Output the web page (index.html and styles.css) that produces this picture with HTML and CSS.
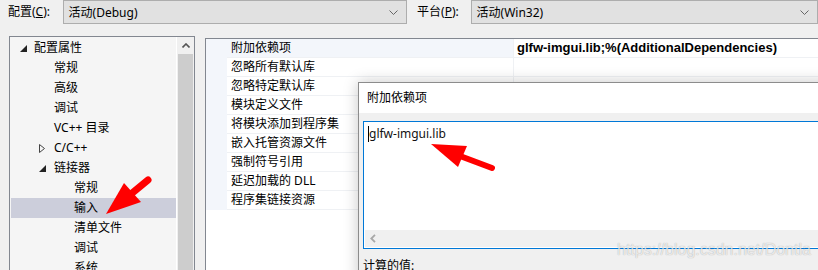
FILE: index.html
```html
<!DOCTYPE html>
<html lang="zh-CN">
<head>
    <meta charset="UTF-8">
    <title>属性页</title>
    <link rel="stylesheet" href="styles.css">
</head>
<body>
    <div class="toolbar">
        <span class="label label-config">配置(<u>C</u>):</span>
        <div class="combo combo-config">
            <span>活动(Debug)</span>
            <svg class="chevron" width="9" height="5" viewBox="0 0 9 5"><polyline points="0.5,0.5 4.5,4.5 8.5,0.5" fill="none" stroke="#666" stroke-width="1"/></svg>
        </div>
        <span class="label label-platform">平台(<u>P</u>):</span>
        <div class="combo combo-platform">
            <span>活动(Win32)</span>
            <svg class="chevron" width="9" height="5" viewBox="0 0 9 5"><polyline points="0.5,0.5 4.5,4.5 8.5,0.5" fill="none" stroke="#666" stroke-width="1"/></svg>
        </div>
    </div>

    <div class="main">
        <div class="tree">
            <ul class="tree-list">
                <li class="tree-row lvl-0"><span class="caret"><svg width="7" height="7" viewBox="0 0 7 7"><polygon points="7,0 7,7 0,7" fill="#222"/></svg></span>配置属性</li>
                <li class="tree-row lvl-1">常规</li>
                <li class="tree-row lvl-1">高级</li>
                <li class="tree-row lvl-1">调试</li>
                <li class="tree-row lvl-1">VC++ 目录</li>
                <li class="tree-row lvl-1"><span class="caret"><svg width="6" height="9" viewBox="0 0 6 9"><polygon points="0.5,0.5 5.5,4.5 0.5,8.5" fill="none" stroke="#444" stroke-width="1"/></svg></span>C/C++</li>
                <li class="tree-row lvl-1"><span class="caret"><svg width="7" height="7" viewBox="0 0 7 7"><polygon points="7,0 7,7 0,7" fill="#222"/></svg></span>链接器</li>
                <li class="tree-row lvl-2">常规</li>
                <li class="tree-row lvl-2 selected">输入</li>
                <li class="tree-row lvl-2">清单文件</li>
                <li class="tree-row lvl-2">调试</li>
                <li class="tree-row lvl-2">系统</li>
            </ul>
            <div class="vscroll">
                <div class="vscroll-btn">
                    <svg width="8" height="5" viewBox="0 0 8 5"><polyline points="0.5,4.5 4,1 7.5,4.5" fill="none" stroke="#555" stroke-width="1.6"/></svg>
                </div>
                <div class="vscroll-thumb"></div>
            </div>
        </div>

        <div class="grid">
            <div class="grid-row first">
                <div class="gutter"></div>
                <div class="name">附加依赖项</div>
                <div class="value">glfw-imgui.lib;%(AdditionalDependencies)</div>
            </div>
            <div class="grid-row"><div class="gutter"></div><div class="name">忽略所有默认库</div><div class="value"></div></div>
            <div class="grid-row"><div class="gutter"></div><div class="name">忽略特定默认库</div><div class="value"></div></div>
            <div class="grid-row"><div class="gutter"></div><div class="name">模块定义文件</div><div class="value"></div></div>
            <div class="grid-row"><div class="gutter"></div><div class="name">将模块添加到程序集</div><div class="value"></div></div>
            <div class="grid-row"><div class="gutter"></div><div class="name">嵌入托管资源文件</div><div class="value"></div></div>
            <div class="grid-row"><div class="gutter"></div><div class="name">强制符号引用</div><div class="value"></div></div>
            <div class="grid-row"><div class="gutter"></div><div class="name">延迟加载的 DLL</div><div class="value"></div></div>
            <div class="grid-row"><div class="gutter"></div><div class="name">程序集链接资源</div><div class="value"></div></div>
        </div>
    </div>

    <div class="dialog">
        <div class="dialog-title">附加依赖项</div>
        <div class="dialog-body">
            <div class="editbox">
                <div class="edit-text"><span class="cursor"></span>glfw-imgui.lib</div>
                <div class="hscroll">
                    <svg width="6" height="9" viewBox="0 0 6 9"><polyline points="5,0.8 1.3,4.5 5,8.2" fill="none" stroke="#a8a8a8" stroke-width="1.8"/></svg>
                </div>
            </div>
            <div class="computed">计算的值:</div>
        </div>
    </div>

    <!-- 标注箭头 -->
    <svg class="arrows" width="818" height="270" viewBox="0 0 818 270">
        <line x1="148" y1="180" x2="131" y2="194" stroke="#ff0000" stroke-width="7" stroke-linecap="round"/>
        <polygon points="106,214 124,183 141,202" fill="#ff0000"/>
        <line x1="492" y1="168" x2="460" y2="156" stroke="#ff0000" stroke-width="6" stroke-linecap="round"/>
        <polygon points="431,144 467,146 458,167" fill="#ff0000"/>
    </svg>

    <div class="watermark">https://blog.csdn.net/Dontla</div>
</body>
</html>
```

FILE: styles.css
```css
html, body {
    margin: 0;
    padding: 0;
}
body {
    width: 818px;
    height: 270px;
    overflow: hidden;
    position: relative;
    background: #f0f0f0;
    color: #000;
    font-family: "Noto Sans", "Noto Sans CJK SC", sans-serif;
    font-size: 12px;
}

/* 顶部下拉框 */
.toolbar {
    display: flex;
    align-items: center;
    height: 24px;
    padding-left: 8px;
    margin-bottom: 12px;
}
.label {
    line-height: 24px;
    white-space: nowrap;
}
.label u {
    text-underline-offset: 1px;
}
.label-config {
    width: 55px;
}
.label-platform {
    width: 54px;
    margin-left: 10px;
}
.combo {
    box-sizing: border-box;
    height: 24px;
    display: flex;
    align-items: center;
    justify-content: space-between;
    padding: 0 8px 0 5px;
    background: #e1e1e1;
    border: 1px solid #adadad;
}
.combo-config {
    width: 347px;
}
.combo-platform {
    width: 350px;
}
.chevron {
    display: block;
}

.main {
    display: flex;
    align-items: flex-start;
    padding-left: 9px;
}

/* 左侧树 */
.tree {
    box-sizing: border-box;
    width: 186px;
    height: 240px;
    display: flex;
    background: #f5f5f5;
    border: 1px solid #828790;
    border-bottom: none;
}
.tree-list {
    list-style: none;
    margin: 0;
    padding: 1px 0 0 1px;
    width: 165px;
}
.tree-row {
    height: 20px;
    line-height: 20px;
    display: flex;
    align-items: center;
    white-space: nowrap;
}
.tree-row.selected {
    background: #cccedb;
}
.lvl-0 { padding-left: 23px; }
.lvl-1 { padding-left: 43px; }
.lvl-2 { padding-left: 63px; }
.caret {
    width: 14px;
    margin-left: -14px;
    display: flex;
    align-items: center;
}
.lvl-0 .caret svg { margin-top: 1px; }
.lvl-1 .caret svg { margin-left: -1px; }

.vscroll {
    width: 17px;
    background: #f0f0f0;
    border-left: 1px solid #fff;
    display: flex;
    flex-direction: column;
}
.vscroll-btn {
    height: 17px;
    display: flex;
    align-items: center;
    justify-content: center;
}
.vscroll-thumb {
    flex: 1;
    margin: 0 1px;
    background: #cdcdcd;
}

/* 右侧属性表 */
.grid {
    box-sizing: border-box;
    flex: 1;
    height: 240px;
    margin-top: 2px;
    margin-left: 10px;
    margin-right: -10px;
    background: #fff;
    border-top: 1px solid #828790;
    border-left: 1px solid #828790;
}
.grid-row {
    display: flex;
    height: 19px;
    line-height: 18px;
}
.gutter {
    width: 21px;
    background: #f3f6fb;
}
.name {
    box-sizing: border-box;
    width: 286px;
    padding-left: 4px;
    border-bottom: 1px solid #eff1f4;
    white-space: nowrap;
}
.grid-row.first .name {
    background: #f3f6fb;
}
.value {
    flex: 1;
    padding-left: 3px;
    border-left: 1px solid #eff1f4;
    border-bottom: 1px solid #eff1f4;
    font-family: "Liberation Sans", sans-serif;
    font-weight: bold;
    font-size: 13px;
    white-space: nowrap;
}

/* 编辑对话框 */
.dialog {
    position: absolute;
    left: 358px;
    top: 82px;
    width: 480px;
    height: 200px;
    background: #f0f0f0;
    border-top: 1px solid #8c8c8c;
    border-left: 1px solid #8c8c8c;
    box-shadow: 0 0 14px rgba(0, 0, 0, 0.22);
}
.dialog-title {
    height: 30px;
    line-height: 30px;
    padding-left: 8px;
    background: #fff;
}
.dialog-body {
    padding: 8px 0 0 4px;
}
.editbox {
    box-sizing: border-box;
    height: 128px;
    padding: 1px;
    background: #fff;
    border: 1px solid #0078d7;
    display: flex;
    flex-direction: column;
}
.edit-text {
    flex: 1;
    padding: 3px 3px 0;
    line-height: 16px;
    font-size: 12px;
    color: #111;
    display: flex;
    align-items: flex-start;
}
.cursor {
    width: 1px;
    height: 16px;
    background: #000;
}
.hscroll {
    height: 17px;
    background: #f0f0f0;
    display: flex;
    align-items: center;
    padding-left: 5px;
}
.computed {
    margin-top: 8px;
    line-height: 18px;
}

.arrows {
    position: absolute;
    left: 0;
    top: 0;
    pointer-events: none;
}

.watermark {
    position: absolute;
    left: 617px;
    top: 240px;
    font-family: "Liberation Sans", sans-serif;
    font-size: 16px;
    line-height: 20px;
    color: rgba(255, 255, 255, 0.75);
    text-shadow: 0 0 1px rgba(0, 0, 0, 0.35);
    white-space: nowrap;
}
```
